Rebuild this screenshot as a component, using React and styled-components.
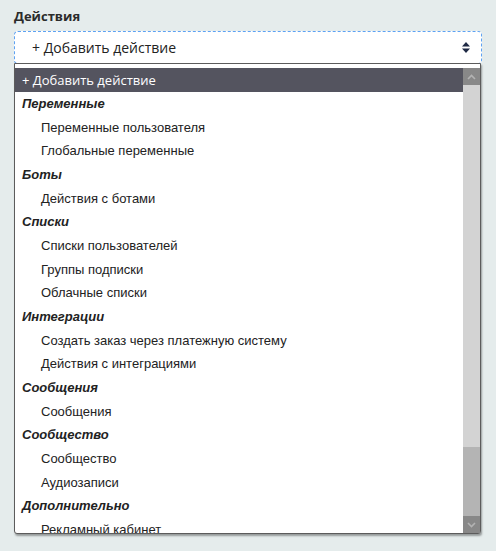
import React from 'react';
import styled, { createGlobalStyle } from 'styled-components';

const GlobalStyle = createGlobalStyle`
  html, body {
    margin: 0;
    padding: 0;
    background: #e5ecec;
  }
`;

const Page = styled.div`
  padding: 6px 14px 0 14px;
  height: 551px;
  box-sizing: border-box;
  font-family: "Open Sans", "Liberation Sans", sans-serif;
`;

const Label = styled.div`
  font-weight: 700;
  font-size: 13px;
  line-height: 20px;
  color: #2b2b2b;
  margin-bottom: 5px;
`;

const SelectBox = styled.div`
  height: 33px;
  box-sizing: border-box;
  border: 1px dashed #5ea2f2;
  border-radius: 4px;
  background: #fff;
  display: flex;
  align-items: center;
  justify-content: space-between;
  padding: 0 11px 0 17px;
  font-size: 14px;
  color: #222;
`;

const Popup = styled.div`
  position: relative;
  z-index: 2;
  margin-top: -1px;
  margin-right: 1px;
  height: 471px;
  box-sizing: border-box;
  border: 1px solid #5c5c5c;
  border-radius: 0 0 3px 3px;
  background: #fff;
  padding-top: 4px;
  display: flex;
  box-shadow: 1px 2px 2px rgba(0, 0, 0, 0.35);
`;

const List = styled.div`
  flex: 1;
  overflow: hidden;
  font-family: "Liberation Sans", Arial, sans-serif;
  font-size: 13px;
  color: #222;
`;

const Selected = styled.div`
  height: 24px;
  line-height: 24px;
  padding-left: 7px;
  background: #54545f;
  color: #fff;
  font-family: "Open Sans", "Liberation Sans", sans-serif;
  font-size: 13px;
`;

const Row = styled.div`
  height: 23.67px;
  line-height: 23.67px;
  white-space: nowrap;
  padding-left: ${p => (p.$group ? 7 : 26)}px;
  font-weight: ${p => (p.$group ? 700 : 400)};
  font-style: ${p => (p.$group ? 'italic' : 'normal')};
`;

const Scrollbar = styled.div`
  width: 17px;
  display: flex;
  flex-direction: column;
  background: #d3d3d3;
`;

const ScrollButton = styled.div`
  height: 17px;
  background: #888;
  display: flex;
  align-items: center;
  justify-content: center;
`;

const Track = styled.div`
  flex: 1;
  display: flex;
  flex-direction: column;
  justify-content: flex-end;
`;

const Thumb = styled.div`
  height: 69px;
  background: #b4b4b4;
`;

const SortIcon = () => (
  <svg width="8" height="11" viewBox="0 0 8 11">
    <path d="M0 4.5 L4 0 L8 4.5 Z" fill="#1e2944" />
    <path d="M0 6.5 L8 6.5 L4 11 Z" fill="#1e2944" />
  </svg>
);

const Chevron = ({ down }) => (
  <svg width="9" height="6" viewBox="0 0 9 6">
    <path
      d={down ? 'M1 1 L4.5 4.5 L8 1' : 'M1 5 L4.5 1.5 L8 5'}
      fill="none"
      stroke="#b3b3b3"
      strokeWidth="1.6"
    />
  </svg>
);

const items = [
  ['Переменные', true],
  ['Переменные пользователя'],
  ['Глобальные переменные'],
  ['Боты', true],
  ['Действия с ботами'],
  ['Списки', true],
  ['Списки пользователей'],
  ['Группы подписки'],
  ['Облачные списки'],
  ['Интеграции', true],
  ['Создать заказ через платежную систему'],
  ['Действия с интеграциями'],
  ['Сообщения', true],
  ['Сообщения'],
  ['Сообщество', true],
  ['Сообщество'],
  ['Аудиозаписи'],
  ['Дополнительно', true],
  ['Рекламный кабинет'],
];

export default function App() {
  return (
    <Page>
      <GlobalStyle />
      <Label>Действия</Label>
      <SelectBox>
        <span>+ Добавить действие</span>
        <SortIcon />
      </SelectBox>
      <Popup>
        <List>
          <Selected>+ Добавить действие</Selected>
          {items.map(([text, group], i) => (
            <Row key={i} $group={group}>{text}</Row>
          ))}
        </List>
        <Scrollbar>
          <ScrollButton><Chevron /></ScrollButton>
          <Track><Thumb /></Track>
          <ScrollButton><Chevron down /></ScrollButton>
        </Scrollbar>
      </Popup>
    </Page>
  );
}
